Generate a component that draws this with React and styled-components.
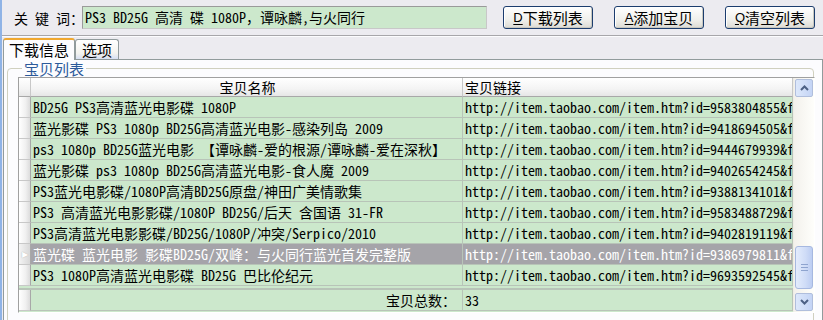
import React from 'react';
import styled, { createGlobalStyle } from 'styled-components';

const GlobalStyle = createGlobalStyle`
  html, body {
    margin: 0;
    padding: 0;
    background: #ecebf0;
  }
  * { box-sizing: border-box; }
`;

const SONG = `"Noto Sans Mono CJK SC", "Liberation Mono", "Noto Sans CJK SC", monospace`;
const SANS = `"Noto Sans CJK SC", "Noto Sans", sans-serif`;

const Window = styled.div`
  width: 823px;
  height: 320px;
  overflow: hidden;
  border-left: 2px solid #8fb3e6;
  background: #ecebf0;
  display: flex;
  flex-direction: column;
`;

const Toolbar = styled.div`
  height: 36px;
  display: flex;
  align-items: center;
  padding: 0 0 0 12px;
  border-bottom: 1px solid #a7a6aa;
  flex-shrink: 0;
`;

const Label = styled.span`
  font-family: ${SONG};
  font-size: 14px;
  color: #000;
  white-space: pre;
  width: 68px;
`;

const KeyInput = styled.div`
  width: 405px;
  height: 23px;
  background: #cce8cc;
  border: 1px solid #9a9a9a;
  border-right-color: #c8c8c8;
  border-bottom-color: #c8c8c8;
  font-family: ${SONG};
  font-size: 14px;
  line-height: 21px;
  padding-left: 2px;
  white-space: pre;
`;

const Buttons = styled.div`
  display: flex;
  gap: 21px;
  margin-left: 16px;
`;

const Button = styled.button`
  width: 90px;
  height: 23px;
  padding: 0;
  border: 1px solid #1c3d6e;
  border-radius: 3px;
  background: linear-gradient(#ffffff, #f0f0ec 60%, #dcdbd4);
  box-shadow: inset -1px -1px 0 #c9c8c0, inset 1px 1px 0 #ffffff;
  font-family: ${SANS};
  font-size: 15px;
  line-height: 20px;
  color: #000;
  display: flex;
  align-items: center;
  justify-content: center;

  u {
    font-family: "Liberation Sans", sans-serif;
    font-size: 13px;
    text-decoration: underline;
    text-underline-offset: 2px;
  }
`;

const TabStrip = styled.div`
  height: 23px;
  display: flex;
  align-items: flex-end;
  padding-left: 1px;
  border-top: 1px solid #fcfcfe;
  flex-shrink: 0;
`;

const Tab = styled.div`
  height: ${({ $active }) => ($active ? '22px' : '20px')};
  padding: 0 ${({ $active }) => ($active ? '5px' : '6px')};
  font-family: ${SANS};
  font-size: 15px;
  line-height: 19px;
  color: #000;
  border: 1px solid #919b9c;
  border-bottom: none;
  border-radius: 3px 3px 0 0;
  margin-bottom: ${({ $active }) => ($active ? '-1px' : '0')};
  position: relative;
  z-index: ${({ $active }) => ($active ? 1 : 0)};
  background: ${({ $active }) =>
    $active ? '#fcfcfe' : 'linear-gradient(#ffffff, #f3f3ef 70%, #d6dff2)'};
  border-top: ${({ $active }) => ($active ? '2px solid #f0a830' : '1px solid #919b9c')};
`;

const Panel = styled.div`
  flex: 1;
  background: #fcfcfe;
  border: 1px solid #919b9c;
  margin-left: 1px;
  padding: 0 8px 0 3px;
`;

const Group = styled.fieldset`
  margin: 0;
  padding: 0 0 0 10px;
  border: 1px solid #d0d0bf;
  border-radius: 4px;
  height: 300px;
  min-inline-size: 0;

  legend {
    font-family: ${SANS};
    font-size: 15px;
    line-height: 17px;
    color: #2c5a9a;
    padding: 0 2px;
    margin-left: 4px;
  }
`;

const GridFrame = styled.div`
  width: 797px;
  height: 236px;
  border: 1px solid;
  border-color: #a0a0a0 #ffffff #ffffff #a0a0a0;
  display: flex;
  background: #ffffff;
  overflow: hidden;
`;

const Grid = styled.div`
  width: 774px;
  display: grid;
  grid-template-columns: 12px 432px 330px;
  grid-template-rows: 19px repeat(9, 21px) 4px 21px;
  align-content: start;
  background: #cce8cc;
`;

const HeadCell = styled.div`
  background: linear-gradient(#ffffff, #f4f4f4 60%, #e6e6e6);
  border-right: 1px solid #c8c8c8;
  border-bottom: 1px solid #a8a8a8;
  font-family: ${SANS};
  font-size: 14px;
  line-height: 18px;
  text-align: ${({ $align }) => $align || 'left'};
  padding-left: 2px;
  white-space: nowrap;
`;

const Indicator = styled.div`
  background: linear-gradient(90deg, #ffffff, #f0f0f0 60%, #dcdcdc);
  border-right: 1px solid #a8a8a8;
  border-bottom: 1px solid #c8c8c8;
  display: flex;
  align-items: center;
  justify-content: center;
  font-size: 8px;
  color: #ffffff;
  ${({ $sel }) => $sel && 'background: linear-gradient(90deg, #f4f4f4, #d8d8d8); text-shadow: 0 0 1px #999;'}
`;

const Cell = styled.div`
  background: ${({ $sel }) => ($sel ? '#a5a4a9' : '#cce8cc')};
  color: ${({ $sel }) => ($sel ? '#ffffff' : '#000000')};
  border-right: 1px solid #b8c4b8;
  border-bottom: 1px solid #b8c4b8;
  font-family: ${SONG};
  font-size: 14px;
  line-height: 20px;
  padding-left: 2px;
  white-space: pre;
  overflow: hidden;
  text-align: ${({ $align }) => $align || 'left'};
  padding-right: ${({ $align }) => ($align === 'right' ? '6px' : '0')};
`;

const Spacer = styled.div`
  grid-column: 1 / -1;
  background: #cce8cc;
  border-bottom: 2px solid #b8c4b8;
`;

const ScrollBar = styled.div`
  width: 21px;
  display: flex;
  flex-direction: column;
  background: linear-gradient(90deg, #f3f1ec, #fefefb);
  border-left: 1px solid #eeede5;
  padding: 1px;
`;

const ArrowBtn = styled.div`
  height: 18px;
  border: 1px solid #b0bedc;
  border-radius: 2px;
  background: linear-gradient(90deg, #dde8fb, #c4d4f5);
  display: flex;
  align-items: center;
  justify-content: center;
`;

const Track = styled.div`
  flex: 1;
  display: flex;
  flex-direction: column;
  justify-content: flex-end;
  padding-bottom: 4px;
`;

const Thumb = styled.div`
  height: 43px;
  border: 1px solid #a6b8e0;
  border-radius: 3px;
  background: linear-gradient(90deg, #e4ecfc, #cfdcf7 60%, #bccdf2);
  display: flex;
  align-items: center;
  justify-content: center;
`;

const Chevron = ({ up }) => (
  <svg width="9" height="6" viewBox="0 0 9 6">
    <path
      d={up ? 'M1 5 L4.5 1.5 L8 5' : 'M1 1 L4.5 4.5 L8 1'}
      fill="none"
      stroke="#4d6185"
      strokeWidth="2"
    />
  </svg>
);

const Grip = () => (
  <svg width="7" height="7" viewBox="0 0 7 7">
    <path d="M0 0.5 H7 M0 3.5 H7 M0 6.5 H7" stroke="#8ea4cf" strokeWidth="1" />
  </svg>
);

const rows = [
  ['BD25G PS3高清蓝光电影碟 1080P', '9583804855'],
  ['蓝光影碟 PS3 1080p BD25G高清蓝光电影-感染列岛 2009', '9418694505'],
  ['ps3 1080p BD25G蓝光电影 【谭咏麟-爱的根源/谭咏麟-爱在深秋】', '9444679939'],
  ['蓝光影碟 ps3 1080p BD25G高清蓝光电影-食人魔 2009', '9402654245'],
  ['PS3蓝光电影碟/1080P高清BD25G原盘/神田广美情歌集', '9388134101'],
  ['PS3 高清蓝光电影影碟/1080P BD25G/后天 含国语 31-FR', '9583488729'],
  ['PS3高清蓝光电影影碟/BD25G/1080P/冲突/Serpico/2010', '9402819119'],
  ['蓝光碟 蓝光电影 影碟BD25G/双峰：与火同行蓝光首发完整版', '9386979811', true],
  ['PS3 1080P高清蓝光电影碟 BD25G 巴比伦纪元', '9693592545'],
];

export default function App() {
  return (
    <>
      <GlobalStyle />
      <Window>
        <Toolbar>
          <Label>关 键 词：</Label>
          <KeyInput>PS3 BD25G 高清 碟 1080P，谭咏麟,与火同行</KeyInput>
          <Buttons>
            <Button><u>D</u>下载列表</Button>
            <Button><u>A</u>添加宝贝</Button>
            <Button><u>Q</u>清空列表</Button>
          </Buttons>
        </Toolbar>
        <TabStrip>
          <Tab $active>下载信息</Tab>
          <Tab>选项</Tab>
        </TabStrip>
        <Panel>
          <Group>
            <legend>宝贝列表</legend>
            <GridFrame>
              <Grid>
                <HeadCell />
                <HeadCell $align="center">宝贝名称</HeadCell>
                <HeadCell>宝贝链接</HeadCell>
                {rows.map(([name, id, sel]) => (
                  <React.Fragment key={id}>
                    <Indicator $sel={sel}>{sel ? '▶' : ''}</Indicator>
                    <Cell $sel={sel}>{name}</Cell>
                    <Cell $sel={sel}>{`http://item.taobao.com/item.htm?id=${id}&f`}</Cell>
                  </React.Fragment>
                ))}
                <Spacer />
                <Indicator />
                <Cell $align="right">宝贝总数：</Cell>
                <Cell>33</Cell>
              </Grid>
              <ScrollBar>
                <ArrowBtn><Chevron up /></ArrowBtn>
                <Track>
                  <Thumb><Grip /></Thumb>
                </Track>
                <ArrowBtn><Chevron /></ArrowBtn>
              </ScrollBar>
            </GridFrame>
          </Group>
        </Panel>
      </Window>
    </>
  );
}
